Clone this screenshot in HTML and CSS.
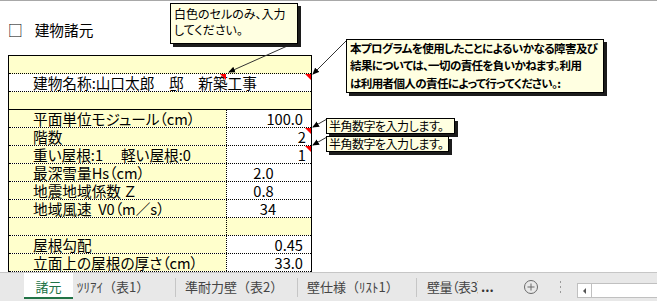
FILE: index.html
```html
<!DOCTYPE html>
<html lang="ja">
<head>
<meta charset="utf-8">
<title>建物諸元</title>
<link rel="stylesheet" href="styles.css">
</head>
<body>
<div class="window">
  <div class="sheet">
    <div class="title"><span>□</span><span>建物諸元</span></div>
    <div class="table">
      <div class="row full yel"></div>
      <div class="row full wht"><div class="lab">建物名称:山口太郎　邸　新築工事</div><i class="tri tri-mid"></i><i class="tri"></i></div>
      <div class="row full yel solid"></div>
      <div class="row"><div class="lab">平面単位モジュール（cm）</div><div class="val">100.0</div></div>
      <div class="row"><div class="lab">階数</div><div class="val r5">2<i class="tri"></i></div></div>
      <div class="row"><div class="lab">重い屋根:1　 軽い屋根:0</div><div class="val r5">1<i class="tri"></i></div></div>
      <div class="row"><div class="lab">最深雪量Hs（cm）</div><div class="val c">2.0</div></div>
      <div class="row"><div class="lab">地震地域係数 Ｚ</div><div class="val c">0.8</div></div>
      <div class="row"><div class="lab">地域風速  V0（m／s）</div><div class="val c2">34</div></div>
      <div class="row"><div class="lab"></div><div class="val yel"></div></div>
      <div class="row"><div class="lab">屋根勾配</div><div class="val">0.45</div></div>
      <div class="row"><div class="lab">立面上の屋根の厚さ（cm）</div><div class="val">33.0</div></div>
    </div>
  </div>

  <svg class="arrows" width="657" height="272" viewBox="0 0 657 272">
    <defs>
      <marker id="ah" markerWidth="7" markerHeight="7" refX="6" refY="3.5" orient="auto" markerUnits="userSpaceOnUse">
        <path d="M0,0.5 L7,3.5 L0,6.5 z" fill="#000"/>
      </marker>
    </defs>
    <line x1="294" y1="43" x2="229" y2="72" stroke="#333" stroke-width="1" marker-end="url(#ah)"/>
    <line x1="347" y1="40" x2="313" y2="74" stroke="#333" stroke-width="1" marker-end="url(#ah)"/>
    <line x1="327" y1="119" x2="313" y2="127" stroke="#333" stroke-width="1" marker-end="url(#ah)"/>
    <line x1="327" y1="137" x2="313" y2="145" stroke="#333" stroke-width="1" marker-end="url(#ah)"/>
  </svg>

  <div class="note n1">白色のセルのみ、入力<br>してください。</div>
  <div class="note n2">本プログラムを使用したことによるいかなる障害及び<br>結果については、一切の責任を負いかねます。利用<br>は利用者個人の責任によって行ってください。:</div>
  <div class="note n3">半角数字を入力します。</div>
  <div class="note n4">半角数字を入力します。</div>

  <div class="tabs">
    <div class="tab active">諸元</div>
    <div class="tab t2">ﾂﾘｱｲ（表1）</div>
    <span class="sep"></span>
    <div class="tab t3">準耐力壁（表2）</div>
    <span class="sep"></span>
    <div class="tab t4">壁仕様（ﾘｽﾄ1）</div>
    <span class="sep"></span>
    <div class="tab t5">壁量（表3）</div>
    <div class="more">...</div>
    <svg class="plus" width="16" height="16" viewBox="0 0 16 16">
      <circle cx="8" cy="8" r="6.5" fill="none" stroke="#6a6a6a" stroke-width="1"/>
      <path d="M8 4.5 V11.5 M4.5 8 H11.5" stroke="#6a6a6a" stroke-width="1"/>
    </svg>
    <div class="grip"><i></i><i></i><i></i></div>
    <div class="hscroll"><div class="hbtn"><span class="larr"></span></div></div>
  </div>
</div>
</body>
</html>
```
FILE: styles.css
```css
* { box-sizing: border-box; }
html, body { margin: 0; padding: 0; background: #fff; }
body { font-family: "Noto Sans CJK JP", "Noto Sans", sans-serif; color: #000; }

.window { position: relative; width: 657px; height: 301px; overflow: hidden; }

.sheet { height: 272px; border-top: 1px solid #a8a8a8; overflow: hidden; }

.title {
  margin: 19px 0 0 8px;
  height: 20px;
  line-height: 20px;
  font-size: 14.67px;
  display: flex;
  gap: 12px;
}

.table {
  margin: 15px 0 0 8px;
  width: 304px;
  border: 1px solid #000;
  border-bottom: none;
}

.row {
  position: relative;
  display: flex;
  height: 18px;
  border-bottom: 1px dotted #000;
  font-size: 14.67px;
  line-height: 17px;
}
.row.solid { border-bottom: 1px solid #000; }
.row.yel { background: #ffffcc; }
.row.wht { background: #fff; }

.lab {
  width: 217px;
  padding-left: 24px;
  white-space: pre;
  font-feature-settings: "palt";
  background: #ffffcc;
}
.row.full .lab { width: 100%; background: transparent; }

.val {
  position: relative;
  flex: 1;
  border-left: 1px dotted #000;
  background: #fff;
  text-align: right;
  padding-right: 8px;
}
.val.r5 { padding-right: 5px; }
.val.c { text-align: center; padding-right: 11px; }
.val.c2 { text-align: center; padding-right: 2px; }
.val.yel { background: #ffffcc; }

.tri {
  position: absolute;
  top: 0;
  right: 0;
  width: 0;
  height: 0;
  border-top: 6px solid #ff0000;
  border-left: 6px solid transparent;
}
.tri-mid { right: 85px; }

.arrows { position: absolute; left: 0; top: 0; pointer-events: none; }

.note {
  position: absolute;
  background: #ffffe1;
  border: 1px solid #000;
  box-shadow: 3px 3px 0 #1c1c1c;
  font-size: 12px;
  font-feature-settings: "palt";
  white-space: nowrap;
  overflow: hidden;
}
.n1 { left: 170px; top: 3px; width: 128px; height: 41px; padding: 2px 0 0 3px; line-height: 16px; }
.n2 {
  left: 346px; top: 39px; width: 258px; height: 54px;
  padding: 0 0 0 3px;
  line-height: 17.4px;
  font-size: 11.5px;
  letter-spacing: -0.6px;
  font-weight: 700;
}
.n3, .n4 { left: 326px; height: 16px; padding: 0 0 0 2px; line-height: 14px; letter-spacing: -0.5px; }
.n3 { top: 118px; width: 129px; }
.n4 { top: 136px; width: 123px; }

.tabs {
  height: 29px;
  background: #e8e8e8;
  border-top: 1px solid #c6c6c6;
  display: flex;
  align-items: flex-start;
  padding-left: 24px;
  font-size: 13px;
  color: #444;
}
.tab {
  height: 26px;
  padding-top: 3px;
  line-height: 21px;
  white-space: nowrap;
  overflow: hidden;
}
.tab.active {
  width: 49px;
  background: #fff;
  color: #217346;
  border-bottom: 2px solid #217346;
  text-align: center;
}
.t2 { width: 102px; padding-left: 4px; }
.t3 { width: 121px; padding-left: 9px; }
.t4 { width: 118px; padding-left: 9px; }
.t5 { width: 61px; padding-left: 10px; font-feature-settings: "palt"; letter-spacing: -0.5px; }
.sep { width: 1px; height: 19px; margin-top: 5px; background: #c6c6c6; }

.more {
  margin-left: 3px;
  width: 14px;
  height: 26px;
  padding-top: 3px;
  line-height: 21px;
  font-weight: 700;
  color: #333;
}
.plus { margin: 6px 0 0 28px; }
.grip {
  margin: 8px 0 0 21px;
  width: 1px;
  display: flex;
  flex-direction: column;
  gap: 3px;
}
.grip i { display: block; width: 1px; height: 2px; background: #9a9a9a; }
.hscroll {
  margin: 10px 0 0 16px;
  flex: 1;
  height: 15px;
  background: #fff;
  border: 1px solid #c0c0c0;
  border-right: none;
}
.hbtn {
  width: 14px;
  height: 13px;
  border-right: 1px solid #c0c0c0;
  display: flex;
  align-items: center;
  justify-content: center;
}
.larr {
  width: 0;
  height: 0;
  border-top: 3px solid transparent;
  border-bottom: 3px solid transparent;
  border-right: 3px solid #555;
}
```
